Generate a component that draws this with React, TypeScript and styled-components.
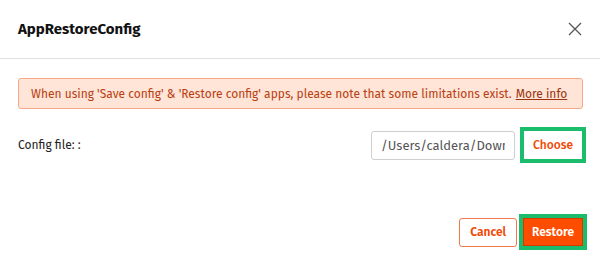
import styled, { createGlobalStyle } from 'styled-components';

const GlobalStyle = createGlobalStyle`
  html, body {
    margin: 0;
    padding: 0;
    background: #fff;
  }
  body {
    font-family: 'Fira Sans', Roboto, 'Liberation Sans', sans-serif;
    color: #222;
  }
`;

const Dialog = styled.div`
  width: 600px;
  height: 262px;
  display: flex;
  flex-direction: column;
  box-sizing: border-box;
`;

const Header = styled.div`
  height: 58px;
  padding: 0 15px 0 18px;
  display: flex;
  align-items: center;
  justify-content: space-between;
  border-bottom: 1px solid #e0e0e0;
  flex-shrink: 0;
`;

const Title = styled.h2`
  margin: 0;
  font-size: 15px;
  font-weight: 700;
  color: #111;
`;

const CloseButton = styled.button`
  border: 0;
  background: none;
  padding: 0;
  width: 20px;
  height: 20px;
  display: flex;
  align-items: center;
  justify-content: center;
  color: #555;
`;

const Content = styled.div`
  padding: 19px 14px 0 18px;
  display: flex;
  flex-direction: column;
`;

const Alert = styled.div`
  height: 31px;
  box-sizing: border-box;
  border: 1px solid #f8a888;
  border-radius: 3px;
  background: #ffe4d8;
  color: #b8400f;
  font-size: 12px;
  display: flex;
  align-items: center;
  padding: 0 12px;
  margin-right: 3px;
  white-space: nowrap;
`;

const AlertLink = styled.a`
  color: #9a3510;
  text-decoration: underline;
  margin-left: 4px;
`;

const FieldRow = styled.div`
  margin-top: 18px;
  display: flex;
  align-items: center;
  justify-content: space-between;
`;

const Label = styled.span`
  font-size: 12px;
  color: #222;
`;

const FileGroup = styled.div`
  display: flex;
  align-items: center;
  gap: 5px;
`;

const PathInput = styled.input`
  width: 144px;
  height: 29px;
  box-sizing: border-box;
  border: 1px solid #cfcfcf;
  border-radius: 3px;
  padding: 0 9px;
  font-family: inherit;
  font-size: 13px;
  color: #555;
  background: #fff;
  outline: none;
`;

const Button = styled.button<{ $primary?: boolean; $focused?: boolean }>`
  height: ${(p) => (p.$focused ? '36px' : '29px')};
  box-sizing: border-box;
  padding: 0 ${(p) => (p.$focused ? '13px' : '10px')};
  font-family: inherit;
  font-size: 12px;
  font-weight: ${(p) => (p.$focused && !p.$primary ? 500 : 600)};
  border-radius: ${(p) => (p.$focused ? '0' : '3px')};
  cursor: pointer;
  color: ${(p) => (p.$primary ? '#fff' : '#f04a06')};
  background: ${(p) => (p.$primary ? '#ff4d00' : '#fff')};
  border: 1px solid ${(p) => (p.$primary ? '#e04000' : '#f27a4a')};
  ${(p) =>
    p.$focused &&
    `
    border: 0;
    box-shadow: 0 0 0 4px #1bbc6c inset;
    outline: none;
  `}
  ${(p) => p.$primary && p.$focused && 'box-shadow: 0 0 0 4px #1bbc6c inset, 0 0 0 5px #d53a00 inset;'}
`;

const Footer = styled.div`
  margin-top: auto;
  padding: 0 13px 12px 18px;
  display: flex;
  justify-content: flex-end;
  align-items: center;
  gap: 2px;
`;

export default function App() {
  return (
    <>
      <GlobalStyle />
      <Dialog>
        <Header>
          <Title>AppRestoreConfig</Title>
          <CloseButton aria-label="Close">
            <svg width="14" height="14" viewBox="0 0 14 14" fill="none" stroke="currentColor" strokeWidth="1.3">
              <path d="M1 1 L13 13 M13 1 L1 13" />
            </svg>
          </CloseButton>
        </Header>
        <Content>
          <Alert>
            When using 'Save config' &amp; 'Restore config' apps, please note that some limitations exist.
            <AlertLink href="#">More info</AlertLink>
          </Alert>
          <FieldRow>
            <Label>Config file: :</Label>
            <FileGroup>
              <PathInput readOnly value="/Users/caldera/Downloads/config.json" />
              <Button $focused>Choose</Button>
            </FileGroup>
          </FieldRow>
        </Content>
        <Footer>
          <Button>Cancel</Button>
          <Button $primary $focused>Restore</Button>
        </Footer>
      </Dialog>
    </>
  );
}
